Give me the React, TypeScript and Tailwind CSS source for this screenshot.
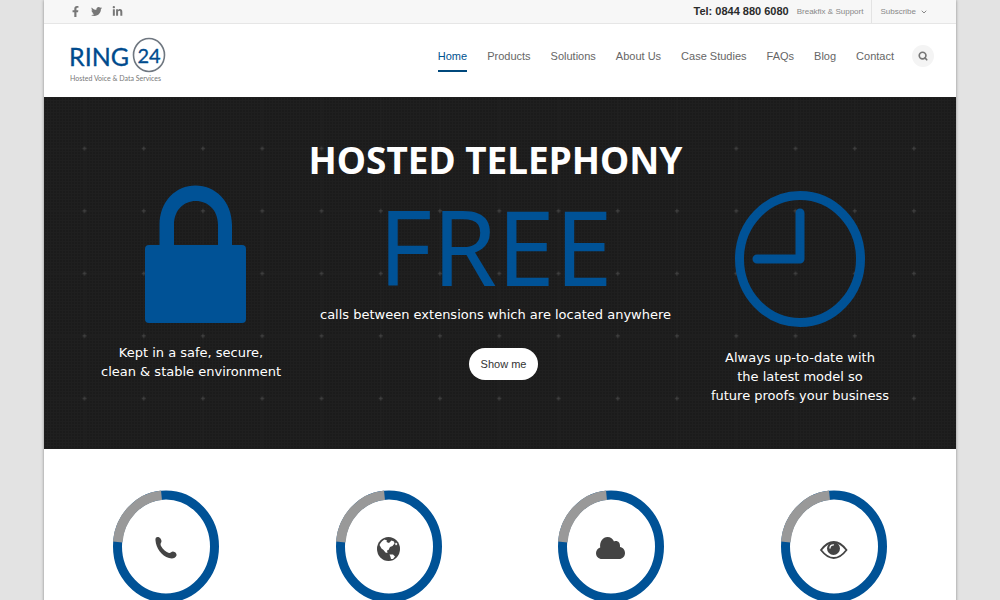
import type { ReactNode } from 'react';
import { FaFacebookF, FaLinkedinIn, FaTwitter } from 'react-icons/fa';
import { ChevronDown, Search } from 'lucide-react';

const NAV_ITEMS = [
  'Home',
  'Products',
  'Solutions',
  'About Us',
  'Case Studies',
  'FAQs',
  'Blog',
  'Contact',
];

function Logo() {
  return (
    <a href="#" aria-label="Ring 24">
      <svg width="104" height="48" viewBox="0 0 104 48">
        <text
          x="-1"
          y="29"
          fontSize="25"
          fill="#004b8d"
          stroke="#004b8d"
          strokeWidth="0.3"
          className="font-['Lato',sans-serif]"
        >
          RING
        </text>
        <ellipse
          cx="79"
          cy="18"
          rx="15.5"
          ry="16.5"
          fill="none"
          stroke="#6f7780"
          strokeWidth="1.6"
        />
        <text
          x="79"
          y="25.500"
          fontSize="20"
          textAnchor="middle"
          fill="#004b8d"
          stroke="#004b8d"
          strokeWidth="0.3"
          className="font-['Lato',sans-serif]"
        >
          24
        </text>
        <text
          x="0"
          y="44"
          fontSize="7"
          fill="#777777"
          className="font-['Lato',sans-serif]"
        >
          Hosted Voice &amp; Data Services
        </text>
      </svg>
    </a>
  );
}

function TopBar() {
  return (
    <div className="flex h-6 items-center justify-between border-b border-[#e6e6e6] bg-[#f7f7f7] pl-[26px] pr-7">
      <div className="flex items-center gap-2.5 text-[#777777]">
        <a href="#" aria-label="Facebook">
          <FaFacebookF size={11} />
        </a>
        <a href="#" aria-label="Twitter">
          <FaTwitter size={11} />
        </a>
        <a href="#" aria-label="LinkedIn">
          <FaLinkedinIn size={11} />
        </a>
      </div>
      <div className="flex h-full items-center text-[8px] text-[#888888]">
        <strong className="mr-2 text-[11px] text-[#2b2b2b]">
          Tel: 0844 880 6080
        </strong>
        <a href="#">Breakfix &amp; Support</a>
        <button
          type="button"
          className="ml-2 flex h-full items-center gap-1 border-l border-[#e3e3e3] pl-2"
        >
          Subscribe
          <ChevronDown size={8} strokeWidth={3} />
        </button>
      </div>
    </div>
  );
}

function Header() {
  return (
    <header className="flex h-[73px] items-center justify-between pl-[26px] pr-[22px]">
      <Logo />
      <div className="flex items-center pb-2.5">
        <nav className="flex gap-5 text-[11px] leading-4 text-[#666666]">
          {NAV_ITEMS.map((item) => (
            <a
              key={item}
              href="#"
              className={
                item === 'Home'
                  ? 'border-b-2 border-[#00487c] pt-2 pb-1.5 text-[#00528f]'
                  : 'pt-2'
              }
            >
              {item}
            </a>
          ))}
        </nav>
        <button
          type="button"
          aria-label="Search"
          className="ml-[18px] flex size-[22px] items-center justify-center rounded-full bg-[#f4f4f4] text-[#777777]"
        >
          <Search size={10} strokeWidth={4} />
        </button>
      </div>
    </header>
  );
}

function HeroBackground() {
  return (
    <svg className="absolute inset-0 size-full" aria-hidden="true">
      <defs>
        <pattern id="mesh" width="3" height="3" patternUnits="userSpaceOnUse">
          <path d="M0 .5H3M.5 0V3" stroke="#1f1f1f" />
        </pattern>
        <pattern
          id="crosses"
          x="11"
          y="20"
          width="59.25"
          height="62.5"
          patternUnits="userSpaceOnUse"
        >
          <path d="M0 31.5H60M29.5 0V63" stroke="#202020" />
          <path d="M27.5 31.5H31.5M29.5 29.5V33.5" stroke="#454545" />
        </pattern>
      </defs>
      <rect width="100%" height="100%" fill="url(#mesh)" />
      <rect width="100%" height="100%" fill="url(#crosses)" />
    </svg>
  );
}

function Hero() {
  return (
    <section className="relative bg-[#1b1b1b] font-['DejaVu_Sans',sans-serif] text-white">
      <HeroBackground />
      <div className="relative flex min-h-[352px] justify-between pl-[56px] pr-[65px] text-center text-[13px] leading-[19px]">
        <div className="flex w-[182px] flex-col items-center pt-[88px]">
          <svg
            width="112"
            height="138"
            viewBox="-10 0 112 138"
            fill="#005296"
          >
            <rect x="0" y="60" width="101" height="78" rx="4" />
            <path d="M14.500 62V40C14.500 16 31 .5 50.500 .5S87 16 87 40V62H73V40C73 25 63 16 50.800 16S29 25 29 40V62Z" />
          </svg>
          <p className="mt-5">
            Kept in a safe, secure,
            <br />
            clean &amp; stable environment
          </p>
        </div>

        <div className="flex flex-col items-center pt-10">
          <h1 className="font-['Noto_Sans',sans-serif] text-[37px] leading-[46px] font-bold">
            HOSTED TELEPHONY
          </h1>
          <p className="mt-3 font-['Noto_Sans',sans-serif] text-[104px] leading-[102px] text-[#005296]">
            FREE
          </p>
          <p className="mt-2">
            calls between extensions which are located anywhere
          </p>
          <button
            type="button"
            className="mt-6 ml-4 h-8 rounded-full bg-white px-3 font-['Liberation_Sans',sans-serif] text-[11px] text-[#333333]"
          >
            Show me
          </button>
        </div>

        <div className="flex w-[182px] flex-col items-center pt-[93px]">
          <svg width="130" height="138" viewBox="0 0 130 138" fill="none">
            <ellipse
              cx="65"
              cy="69"
              rx="60.500"
              ry="63.500"
              stroke="#005296"
              strokeWidth="9"
            />
            <path
              d="M65 23V69H22"
              stroke="#005296"
              strokeWidth="9"
              strokeLinecap="round"
              strokeLinejoin="round"
            />
          </svg>
          <p className="mt-5">
            Always up-to-date with
            <br />
            the latest model so
            <br />
            future proofs your business
          </p>
        </div>
      </div>
    </section>
  );
}

function Ring({ children }: { children: ReactNode }) {
  return (
    <svg width="106" height="113" viewBox="0 0 106 113">
      <ellipse
        cx="53"
        cy="56.500"
        rx="48.500"
        ry="51.500"
        fill="none"
        stroke="#005296"
        strokeWidth="9"
      />
      <path
        d="M4.700 52A48.500 51.500 0 0 1 48.500 5.200"
        fill="none"
        stroke="#999999"
        strokeWidth="9.600"
      />
      <g fill="#444444">{children}</g>
    </svg>
  );
}

function Services() {
  return (
    <section className="grid grid-cols-4 justify-items-center px-[11px] pt-[41px]">
      <Ring>
        <path d="M42.500 50.500C42 47.500 44 46.500 46 47.300C48 48.500 49 50.800 48.300 52.300C47.500 53.300 47.300 54.500 48 56C50 59.500 53 62 56 63C57.500 63.500 58.300 61.500 60 61.500C62 61.700 64 63.500 63.500 65.500C62.500 68.500 59 69 56 68C48.500 66 43 58 42.500 50.500Z" />
      </Ring>
      <Ring>
        <ellipse cx="52.500" cy="59" rx="11.500" ry="12" />
        <path
          fill="#ffffff"
          d="M43.500 55C44.500 52.500 46.500 50.500 48.500 49.500L51 50.500L50.500 52L53 53L55.500 50.500L58 51.500L58.500 53.500L56.500 56L54 57L52.500 60L51 60.500L51.500 63L49.500 62.500L47.500 60L45.500 58.500ZM60 52.500L61.500 54L60 55.500L59 54ZM53.500 64.500L57 64.500L59 66.500L57 69L55 69L54.500 67Z"
        />
      </Ring>
      <Ring>
        <path d="M44 69C40.500 69 38 66.500 38 63C38 60.500 40 58 42.200 57.500C41.500 51.500 45 47 49.500 47C52.500 47 55 48.800 56 51.500C59 50 62.500 52 62 57C65 57.500 67 60 67 63C67 66.500 64.500 69 61 69Z" />
      </Ring>
      <Ring>
        <path
          fill="none"
          stroke="#444444"
          strokeWidth="1.800"
          d="M40 60C45 53.500 49 52 52.800 52S60.500 53.500 65.500 60C60.500 66.500 56.500 68 52.800 68S45 66.500 40 60Z"
        />
        <ellipse cx="52.500" cy="58.500" rx="6.500" ry="6.500" />
        <path
          fill="none"
          stroke="#ffffff"
          strokeWidth="1.300"
          strokeLinecap="round"
          d="M49 58C49 56 50.500 54.800 52.500 54.800"
        />
      </Ring>
    </section>
  );
}

export default function App() {
  return (
    <div className="min-h-screen bg-[#e3e3e3] px-11 font-['Liberation_Sans',sans-serif]">
      <main className="min-h-screen bg-white shadow-[0_0_3px_rgba(0,0,0,0.4)]">
        <TopBar />
        <Header />
        <Hero />
        <Services />
      </main>
    </div>
  );
}
